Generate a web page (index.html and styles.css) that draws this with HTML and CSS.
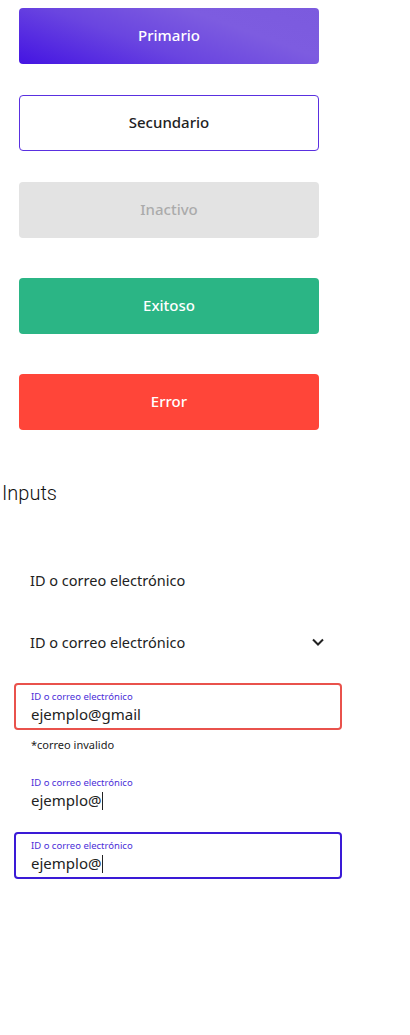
FILE: index.html
```html
<!DOCTYPE html>
<html lang="es">
<head>
  <meta charset="UTF-8">
  <title>Componentes</title>
  <link rel="stylesheet" href="styles.css">
</head>
<body>

  <div class="buttons">
    <button class="btn btn-primary">Primario</button>
    <button class="btn btn-secondary">Secundario</button>
    <button class="btn btn-disabled" disabled>Inactivo</button>
    <button class="btn btn-success">Exitoso</button>
    <button class="btn btn-error">Error</button>
  </div>

  <h2 class="section-title">Inputs</h2>

  <div class="inputs">
    <div class="field field-plain">ID o correo electrónico</div>

    <div class="field field-select">
      <span>ID o correo electrónico</span>
      <svg class="chevron" width="14" height="10" viewBox="0 0 14 10">
        <path d="M2 2.5 L7 7.5 L12 2.5" fill="none" stroke="#222" stroke-width="2"/>
      </svg>
    </div>

    <div class="box box-error">
      <div class="label">ID o correo electrónico</div>
      <div class="value">ejemplo@gmail</div>
    </div>
    <div class="hint">*correo invalido</div>

    <div class="box box-bare">
      <div class="label">ID o correo electrónico</div>
      <div class="value">ejemplo@<span class="caret"></span></div>
    </div>

    <div class="box box-focus">
      <div class="label">ID o correo electrónico</div>
      <div class="value">ejemplo@<span class="caret"></span></div>
    </div>
  </div>

</body>
</html>
```

FILE: styles.css
```css
body {
  margin: 0;
  padding: 0;
  font-family: 'Noto Sans', 'Open Sans', sans-serif;
  color: #222;
  background: #fff;
}

.buttons {
  display: flex;
  flex-direction: column;
  padding: 8px 0 0 19px;
}

.btn {
  width: 300px;
  height: 56px;
  padding: 0 0 3px;
  border: none;
  border-radius: 4px;
  font-family: 'Noto Sans', sans-serif;
  font-size: 15px;
  font-weight: 500;
  color: #fff;
  cursor: pointer;
}

.btn-primary {
  background: linear-gradient(20deg, #4414e2 0%, #6a45e0 40%, #7d5ce0 70%, #7b5ade 100%);
  margin-bottom: 31px;
}

.btn-secondary {
  background: #fff;
  border: 1px solid #5a30e0;
  color: #222;
  margin-bottom: 31px;
}

.btn-disabled {
  background: #e3e3e3;
  color: #ababab;
  margin-bottom: 40px;
  cursor: default;
}

.btn-success {
  background: #2bb585;
  margin-bottom: 40px;
}

.btn-error {
  background: #ff4539;
}

.section-title {
  margin: 50px 0 0 2px;
  font-family: Roboto, sans-serif;
  font-weight: 300;
  font-size: 20px;
  line-height: 26px;
  color: #111;
}

.inputs {
  display: flex;
  flex-direction: column;
  padding: 0 0 0 14px;
}

.field {
  width: 312px;
  height: 24px;
  padding-left: 16px;
  font-size: 14.5px;
  line-height: 24px;
}

.field-plain {
  margin-top: 62px;
}

.field-select {
  margin-top: 38px;
  display: flex;
  align-items: center;
  justify-content: space-between;
}

.chevron {
  margin-right: 17px;
}

.box {
  width: 328px;
  box-sizing: border-box;
  border: 2px solid transparent;
  border-radius: 4px;
  padding: 6px 15px 0;
  height: 47px;
}

.box-error {
  margin-top: 29px;
  border-color: #e9524c;
}

.box-bare {
  margin-top: 16px;
}

.box-focus {
  margin-top: 16px;
  border-color: #3a1ad6;
}

.label {
  font-size: 9.5px;
  line-height: 12px;
  color: #4b2ed8;
}

.value {
  font-size: 15px;
  line-height: 22px;
  color: #222;
}

.caret {
  display: inline-block;
  width: 1px;
  height: 18px;
  background: #222;
  vertical-align: -4px;
  margin-left: 1px;
}

.hint {
  padding-left: 17px;
  margin-top: 7px;
  font-size: 11px;
  line-height: 16px;
  color: #222;
}
```
